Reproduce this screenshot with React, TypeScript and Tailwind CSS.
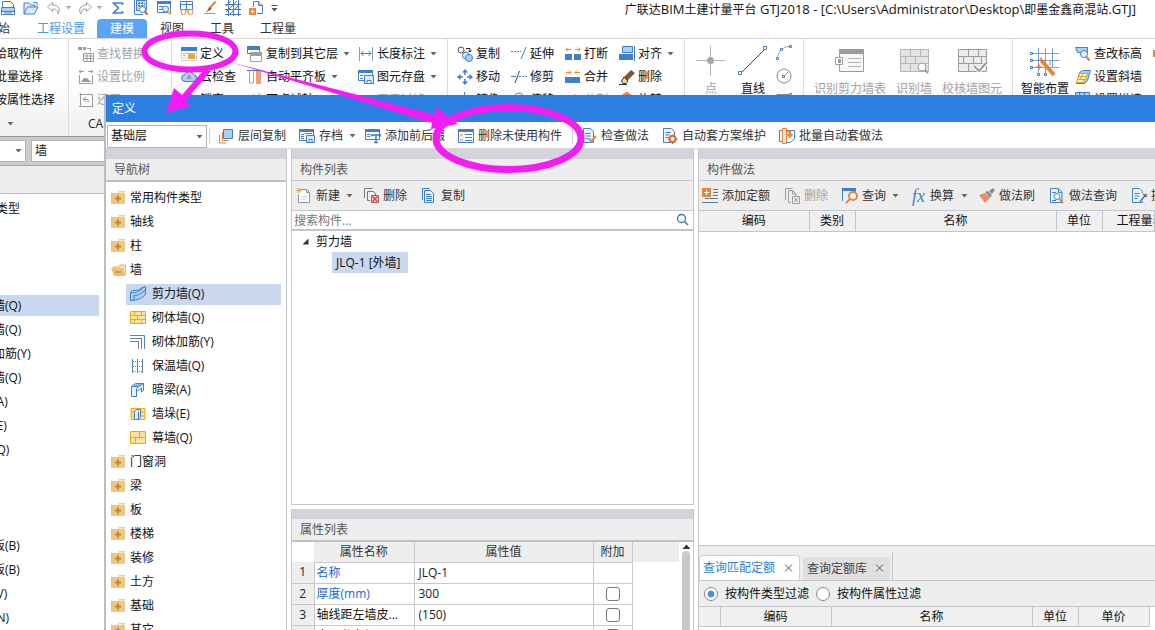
import { useState } from "react";
import type { ReactNode } from "react";
import { clsx } from "clsx";

const B = "#3f7fcb";
const LB = "#a9d0f7";
const O = "#e8853a";
const G = "#9c9c9c";

function Svg({ children, w = 16, h = 16 }: { children: ReactNode; w?: number; h?: number }) {
  return (
    <svg width={w} height={h} viewBox={`0 0 ${w} ${h}`} fill="none" className="shrink-0" aria-hidden="true">
      {children}
    </svg>
  );
}

function Caret({ className }: { className?: string }) {
  return (
    <svg width="7" height="4" viewBox="0 0 7 4" className={clsx("shrink-0", className)} aria-hidden="true">
      <path d="M0.5 0h6L3.5 3.5z" fill="#666" />
    </svg>
  );
}

const icons = {
  print: (
    <Svg>
      <path d="M2.500 7V1.500h8l3 3V7" fill="#fff" stroke={B} />
      <path d="M1.500 7.500h13v7h-13z" fill="#fff" stroke={B} />
      <path d="M2 8h12v3H2z" fill={LB} />
      <path d="M1 11.500h14M4 13h8" stroke={B} />
    </Svg>
  ),
  open: (
    <Svg>
      <path d="M1 14V3h5l1.500 2H12v2M1 14l3.500-7H15l-3.500 7z" fill="#dcecfb" stroke={B} />
      <path d="M10 2.500h4v3" stroke={B} />
    </Svg>
  ),
  undo: (
    <Svg>
      <path d="M6.500 2.500L1.500 7l5 4.500V9c4 0 5 1 5.500 5 3-4 1-9-5.500-9z" stroke={G} />
    </Svg>
  ),
  redo: (
    <Svg>
      <path d="M9.500 2.500l5 4.500-5 4.500V9c-4 0-5 1-5.500 5C1 10 3 5 9.500 5z" stroke={G} />
    </Svg>
  ),
  sigma: (
    <Svg>
      <path d="M12.500 5V3h-9l5 5-5 5h9V11" stroke={B} strokeWidth="1.600" />
    </Svg>
  ),
  calcSearch: (
    <Svg>
      <path d="M1.500 0v14.500H10" stroke={B} />
      <path d="M3.500 0.500h10v10h-10z" fill="#c9dff5" stroke={B} />
      <path d="M5 3.500h7M5 5.500h7M6.500 2v5M9.500 2v5" stroke="#5a6f8a" strokeDasharray="2 1" />
      <circle cx="9.500" cy="9.500" r="3" fill="#fff" stroke={B} />
      <path d="M11.500 11.500l3 3" stroke="#b5683c" strokeWidth="2" />
    </Svg>
  ),
  winSearch: (
    <Svg>
      <path d="M1.500 2.500h13v10h-13z" fill="#fff" stroke={B} />
      <path d="M1 1h14v3H1z" fill={B} />
      <path d="M3 6.500h4M3 9.500h3" stroke={B} />
      <circle cx="9.500" cy="9" r="3" fill="#e3effb" stroke={B} />
      <path d="M12 11.500l3 3" stroke="#e5b12c" strokeWidth="2" />
    </Svg>
  ),
  gridGlasses: (
    <Svg>
      <path d="M1.500 1.500h12v8h-12zM1 4.500h13M7.500 1v8" stroke={B} />
      <circle cx="4.500" cy="12" r="2.500" fill="#fff" stroke={O} />
      <circle cx="11.500" cy="12" r="2.500" fill="#fff" stroke={O} />
      <path d="M7 11.500h2" stroke={O} />
    </Svg>
  ),
  brushLine: (
    <Svg>
      <path d="M13.500 1.500L7 9" stroke={O} strokeWidth="2" />
      <path d="M8 7L4 12.500l5.500-3.500z" fill="#6b4a34" />
      <path d="M2 13.500h11" stroke={O} />
    </Svg>
  ),
  mesh: (
    <Svg>
      <path d="M0 4.500h16M0 9.500h16M0 14.500h16M3.500 0v16M8.500 0v16M13.500 0v16M1 6l5-5M1 12L12 1M4 15L15 4" stroke={B} />
    </Svg>
  ),
  docPlus: (
    <Svg>
      <path d="M5.500 7V1.500h5l4 4v8H9" stroke={B} />
      <path d="M10.500 1.500v4h4" fill={LB} stroke={B} />
      <path d="M1 8h7v7H1z" fill={O} />
      <path d="M4.500 9.500v4M2.500 11.500h4" stroke="#fff" />
    </Svg>
  ),
  findReplace: (
    <Svg>
      <path d="M0 1h4v3H0zM5 1h3v3H5z" fill={G} />
      <path d="M9 2.500h3.500v3M5.500 7.500h10v8h-10zM5 10h11M5 12.500h11M9 8v7M12.500 8v7" stroke={G} />
    </Svg>
  ),
  scale: (
    <Svg>
      <path d="M1 2.500h5M10 2.500h5M3 1L1 2.500 3 4M13 1l2 1.500L13 4M1.500 6v8.500h13V6" stroke={G} />
      <path d="M3 13l3-4h3l4 4z" fill={G} />
    </Svg>
  ),
  restore: (
    <Svg>
      <path d="M2.500 1v13.500M1 14.500h14M1.500 2.500h13V14M5 7.500h5v3M8 5L5 7.500 8 10" stroke={G} />
    </Svg>
  ),
  define: (
    <Svg>
      <path d="M0.500 2.500h15v12h-15z" fill="#fff" stroke="#c9d4e2" />
      <path d="M0 1h16v4H0z" fill={B} />
      <path d="M2 7.500h12M2 9.500h3M2 12h3" stroke="#b4c3d6" />
      <path d="M7 8h7v5H7z" fill="#e5a93c" />
    </Svg>
  ),
  cloud: (
    <Svg>
      <path d="M4 12.500a3.500 3.500 0 010-7 4.500 4.500 0 018.500 0 3.500 3.500 0 01-.5 7z" fill={LB} stroke={B} />
      <path d="M6 10l2-4 2 4M7 9h2" stroke="#c46a7a" />
    </Svg>
  ),
  lock: (
    <Svg>
      <path d="M4.500 7V5a3.500 3.500 0 017 0v2M3 7.500h10v7H3z" stroke={B} fill={LB} />
    </Svg>
  ),
  layers: (
    <Svg>
      <path d="M0.500 1.500h12v6h-12z" fill="#fff" stroke={B} />
      <path d="M0 0h13v4H0z" fill={B} />
      <path d="M3.500 7.500h11v8h-11z" fill="#fff" stroke={G} />
      <path d="M3 6h12v4H3z" fill={G} />
    </Svg>
  ),
  alignBoard: (
    <Svg>
      <path d="M0 1.500h16" stroke={B} />
      <path d="M2.500 2v12h4V2" fill="#fff" stroke="#8ea9c8" />
      <path d="M9 2h5v13H9z" fill="#f19a78" />
    </Svg>
  ),
  axis: (
    <Svg>
      <path d="M2.500 15V5M13 1L5 14M1 6l13 5M7 2v3" stroke={G} />
    </Svg>
  ),
  dimension: (
    <Svg>
      <path d="M1.500 1v14M14.500 1v14" stroke="#7f9cc0" />
      <path d="M3 7.500h10M5.500 5L3 7.500 5.500 10M10.500 5L13 7.500l-2.500 2.500" stroke={B} />
    </Svg>
  ),
  saveEl: (
    <Svg>
      <path d="M0.500 1.500h14v10h-14z" fill="#fff" stroke={B} />
      <path d="M0 1h15v3H0z" fill={B} />
      <path d="M2 6.500h3M2 9.500h3" stroke={B} />
      <path d="M6.500 6.500h9v8h-9z" fill="#dcebfa" stroke={B} />
      <path d="M9 11.500h4v3H9z" fill="#fff" stroke={B} />
    </Svg>
  ),
  filter: (
    <Svg>
      <path d="M0 3h14L9 9v6l-3-2V9z" fill={G} />
    </Svg>
  ),
  copyEl: (
    <Svg>
      <circle cx="4" cy="4" r="3" stroke="#555" />
      <path d="M9 2.500h4v3M11.500 4.500l1.500 1.500 1.500-1.500" stroke="#222" />
      <circle cx="9" cy="9.500" r="3.500" fill="#dcecfb" stroke={B} />
      <circle cx="12" cy="12" r="3.500" fill={LB} stroke={B} />
    </Svg>
  ),
  move: (
    <Svg>
      <path d="M8 0l3 3.500H5zM8 16l3-3.500H5zM0 8l3.500-3v6zM16 8l-3.500-3v6z" fill={B} />
      <path d="M8 3v3M8 10v3M3 8h3M10 8h3" stroke={B} strokeWidth="1.500" />
    </Svg>
  ),
  mirror: (
    <Svg>
      <path d="M7.500 0v15M5 4L1 14h4zM10 4l4 10h-4z" stroke={B} />
    </Svg>
  ),
  extend: (
    <Svg>
      <path d="M0 5.500h10" stroke={B} strokeDasharray="2 1" />
      <path d="M15 1l-5 12" stroke={B} />
    </Svg>
  ),
  trim: (
    <Svg>
      <path d="M0 7.500h5" stroke={B} />
      <path d="M8 7.500h8" stroke={B} strokeDasharray="2 1" />
      <path d="M8.500 2L4 14" stroke="#2c4f80" />
    </Svg>
  ),
  offset: (
    <Svg>
      <circle cx="8" cy="6" r="5" stroke="#5b8f72" />
      <circle cx="8" cy="6" r="2" stroke={B} />
    </Svg>
  ),
  breakEl: (
    <Svg>
      <path d="M0 8h7v6H0zM9 8h7v6H9z" fill={B} />
      <path d="M1 3.500h5M10 3.500h5M3 1.500L1 3.500l2 2M13 1.500l2 2-2 2" stroke={O} />
    </Svg>
  ),
  merge: (
    <Svg>
      <path d="M0 8h15v6H0z" fill={B} />
      <path d="M1 3.500h5M10 3.500h5M4 1.500l2 2-2 2M12 1.500l-2 2 2 2" stroke={O} />
    </Svg>
  ),
  split: (
    <Svg>
      <path d="M2 14L10 2l3 2-8 11z" fill={G} />
    </Svg>
  ),
  alignEl: (
    <Svg>
      <path d="M3.500 0.500h10v6h-10z" fill={LB} stroke={B} />
      <path d="M0 8h14v6H0z" fill={B} />
      <path d="M15.500 0v15" stroke={B} />
    </Svg>
  ),
  eraser: (
    <Svg>
      <path d="M12 1l4 3-8 8-4-3z" fill="#7d5638" />
      <path d="M5 8l4 4-2 2.500H4L2.500 12z" fill="#f0d5a8" stroke="#333" />
      <path d="M0 15.500h8" stroke="#333" />
    </Svg>
  ),
  rotate: (
    <Svg>
      <path d="M3 12V6a4 4 0 018 0v2M7 0l4 3-4 3" stroke={O} strokeWidth="2" />
    </Svg>
  ),
  elevation: (
    <Svg>
      <path d="M0.500 1.500h12v5l-3 3-3-3h-4z" fill={LB} stroke={B} />
      <circle cx="9" cy="8" r="3.500" fill="#e4f0fc" stroke={B} />
      <path d="M11.500 11l3 3.500" stroke={O} strokeWidth="2.500" />
    </Svg>
  ),
  slopeWall: (
    <Svg>
      <path d="M4.500 3.500l3-2h8l-3 10-3 3H1.500z" fill={LB} stroke={B} />
      <path d="M4.500 4.500h8l-3 9h-8z" fill="#fff3c4" stroke="#dba92b" />
      <path d="M4 7.500h8M3 10.500h8M8 4.500l-1 3M6 7.500l-1 3M9 10.500l-1 3" stroke="#dba92b" />
    </Svg>
  ),
  archWall: (
    <Svg>
      <path d="M0.500 0.500h14v13h-14z" fill={LB} stroke={B} />
      <path d="M0 3.500h15M0 7.500h15M4.500 1v9M9.500 1v9" stroke={B} />
    </Svg>
  ),
  floorCopy: (
    <Svg>
      <path d="M1.500 7v8H8M4.500 4v8.500H11" stroke={O} />
      <path d="M5.500 1.500h9v9h-9z" fill={LB} stroke={B} />
    </Svg>
  ),
  archive: (
    <Svg>
      <path d="M0.500 1.500h14v11h-14z" fill="#fff" stroke={B} />
      <path d="M0 1h15v3H0z" fill={B} />
      <path d="M2 6.500h3M2 8.500h3M2 10.500h3M6 5.500h7" stroke={B} />
      <path d="M7.500 7.500h8v7h-8z" fill="#dcebfa" stroke={B} />
      <path d="M10 11.500h3v3h-3z" fill="#fff" stroke={B} />
    </Svg>
  ),
  affix: (
    <Svg>
      <path d="M0.500 1.500h14v10h-14z" fill="#fff" stroke={B} />
      <path d="M0 1h15v3H0z" fill={B} />
      <path d="M2 6.500h3M2 8.500h3" stroke={B} />
      <path d="M6.500 8.500V7h9v1.500M11 7v8M9 14.500h4" stroke={B} strokeWidth="1.500" />
    </Svg>
  ),
  unused: (
    <Svg>
      <path d="M0.500 1.500h15v13h-15z" fill="#fff" stroke={B} />
      <path d="M0 1h16v3H0z" fill={B} />
      <path d="M7 6.500h7M7 9.500h7M7 12.500h7" stroke={B} />
      <path d="M2 5.500l3 3M5 5.500l-3 3M2 10.500l3 3M5 10.500l-3 3" stroke={O} />
    </Svg>
  ),
  checkDoc: (
    <Svg>
      <path d="M2.500 0.500h7l3 3v11h-10z" fill="#eaf3fc" stroke={B} />
      <path d="M4.500 5.500h5M4.500 8h5M4.500 10.500h3" stroke={B} />
      <path d="M8 10.500l2.500 3L15 8" stroke={O} strokeWidth="2" />
    </Svg>
  ),
  gearDoc: (
    <Svg>
      <path d="M1.500 0.500h8l3 3v11h-11z" fill="#eaf3fc" stroke={B} />
      <path d="M3.500 4.500h5M3.500 7h4M3.500 9.500h3" stroke={B} />
      <circle cx="10.500" cy="11" r="3" fill="#fff" stroke="#e8692c" strokeWidth="2" />
      <path d="M10.500 6.500v1.500M10.500 14v2M6 11h1.500M13.500 11H15.500M7.500 8l1 1M13.500 8l-1 1M7.500 14l1-1M13.500 14l-1-1" stroke="#e8692c" strokeWidth="1.500" />
    </Svg>
  ),
  batchDoc: (
    <Svg>
      <path d="M3.500 2.500h-3v11h3M7.500 2.500h8v8l-4 4h-4" stroke={B} />
      <path d="M3.500 0.500h4v15h-4z" fill="#fde0cb" stroke={O} />
      <path d="M7 3.500h4v4M8.500 6l2.500 2.500L13.500 6" stroke={O} strokeWidth="2" />
    </Svg>
  ),
  newDoc: (
    <Svg>
      <path d="M2.500 6v8.500h11V4.500l-3-3H5" fill="#fff" stroke="#8a95a3" />
      <path d="M10.500 1.500v3h3" stroke="#8a95a3" />
      <path d="M5 8.500h6M5 11h6" stroke="#c9d4e2" />
      <path d="M3 0v5M0.500 2.500h5M1 0.500l4 4M5 0.500l-4 4" stroke="#f0a030" />
    </Svg>
  ),
  deleteDoc: (
    <Svg>
      <path d="M1.500 10V0.500h8M4.500 12.500v-9h6l2 2V7M4.500 12.500H7" stroke="#777" />
      <path d="M8.500 7.500h7v7h-7z" fill="#f6d8d8" stroke="#c0504d" />
      <path d="M9.500 8.500l5 5M14.500 8.500l-5 5" stroke="#c0504d" strokeWidth="1.500" />
    </Svg>
  ),
  deleteGray: (
    <Svg>
      <path d="M1.500 12V0.500h7M4.500 14.500v-12h4l3.500 3.500v2M4.500 14.500H7M8.500 2.500V6H12" stroke={G} />
      <path d="M8.500 8.500h7v7h-7zM10 10l4 4M14 10l-4 4" stroke={G} />
    </Svg>
  ),
  copyDoc: (
    <Svg>
      <path d="M1.500 12V0.500h7" stroke={B} />
      <path d="M3.500 2.500h6l3 3v9h-9z" fill="#eaf3fc" stroke={B} />
      <path d="M5 6.500h5M5 8.500h6M5 10.500h6M5 12.500h6" stroke={B} />
    </Svg>
  ),
  addQuota: (
    <Svg>
      <path d="M0 0h9v9H0z" fill={O} />
      <path d="M4.500 2v5M2 4.500h5" stroke="#fff" />
      <path d="M11 1.500h5M11 4.500h5M11 7.500h5M3 10.500h13M0 14.500h16" stroke="#5f7896" />
    </Svg>
  ),
  query: (
    <Svg>
      <path d="M0.500 13V1.500h13V4" stroke={B} />
      <path d="M0 0h14v3H0z" fill={B} />
      <circle cx="11" cy="8" r="4" fill="#fff" stroke={O} strokeWidth="2" />
      <path d="M8 11l-4 4" stroke={O} strokeWidth="2" />
    </Svg>
  ),
  brush: (
    <Svg>
      <path d="M0 7l6-2 5 5-5 5z" fill="#f0896a" />
      <path d="M6 4l3-1 4 4-2 3zM10 3l4-3 2 2-3 4z" fill="#8a8f96" />
    </Svg>
  ),
  docSearch: (
    <Svg>
      <path d="M1.500 0.500h8l3.500 3.500v10.500h-11.500z" fill="#eaf3fc" stroke={B} />
      <path d="M3 4.500h4M3 12.500h4M9.500 1v3.500H13" stroke={B} />
      <circle cx="8" cy="8.500" r="3" fill="#fff" stroke={B} />
      <path d="M10.500 11l3.500 4" stroke={O} strokeWidth="2" />
    </Svg>
  ),
  docPen: (
    <Svg>
      <path d="M11.500 5V3.500l-3-3h-7v14h10V13" fill="#eaf3fc" stroke={B} />
      <path d="M3.500 5.500h5M3.500 8h5M3.500 10.500h3" stroke={B} />
      <path d="M15.500 6L9 13.500M12 6l4 3" stroke="#5b6b7c" strokeWidth="1.500" />
    </Svg>
  ),
  folder: (
    <Svg w={15}>
      <path d="M0 3h14v11H0z" fill="#ecc682" />
      <path d="M6 2.500L8 1h6v1.500z" fill="#f0cf94" />
      <path d="M7 5.500v6M4 8.500h6" stroke="#b98a35" strokeWidth="2" />
    </Svg>
  ),
  folderOpen: (
    <Svg w={15}>
      <path d="M2 5h6l1-2h5.500v10H3z" fill="#f6e3bd" stroke="#e3b763" />
      <path d="M0 6h12l2 8H3z" fill="#ecc070" />
      <path d="M4 10h6" stroke="#a97c2c" />
    </Svg>
  ),
  shearWall: (
    <Svg>
      <path d="M0.500 6.500C6 7 11 5 13 1.500l2.500-1V8C13 12 7 14.500 0.500 14.500z" fill={LB} stroke={B} />
      <path d="M0.500 6.500l2-2C7 5 11 3 13 1M4 9.500c4 0 8-2 11.500-6M4 9.500v5" stroke={B} />
    </Svg>
  ),
  brick: (
    <Svg>
      <path d="M0.500 1.500h15v12h-15z" fill="#fce29a" stroke="#f0a818" />
      <path d="M0 5.500h16M0 9.500h16M4.500 1v4M11.500 1v4M7.500 5v4M4.500 9v5M11.500 9v5" stroke="#f0a818" />
    </Svg>
  ),
  rebar: (
    <Svg>
      <path d="M0 1.500h14.500V15M0 4.500h11.500V15M0 7.500h8.500V15" stroke="#5b84b5" />
    </Svg>
  ),
  insulation: (
    <Svg>
      <path d="M2.500 1v14M7.500 1v14M12.500 1v14" stroke="#5b84b5" />
      <path d="M3 3.500h10M3 8.500h10M3 13.500h10" stroke="#5b84b5" strokeDasharray="1 1" />
    </Svg>
  ),
  hiddenBeam: (
    <Svg>
      <path d="M1.500 4.500l4-3h8v7l-2 1.500V6l-5 3.500v5h-5z" fill="#eaf3fc" stroke={B} />
      <path d="M1.500 4.500h7l5-3M4 3h7M6.500 14.500v-8l2-2" stroke={B} />
    </Svg>
  ),
  pier: (
    <Svg>
      <path d="M1 2.500h14v11H1z" fill="#fce29a" stroke="#f0a818" />
      <path d="M1 6h14M1 10h14" stroke="#f0a818" />
      <path d="M4.500 5.500l2-2h4v8l-2 2h-4zM8.500 5.500v8" fill="#e3effb" stroke={B} />
    </Svg>
  ),
  curtain: (
    <Svg>
      <path d="M0.500 1.500h15v12h-15z" fill="#fce0a0" stroke="#f0a818" />
      <path d="M0 7.500h16M9.500 1v6M5.500 7v7" stroke="#f0a818" />
    </Svg>
  ),
};

type IconName = keyof typeof icons;

interface ToolProps {
  icon?: IconName;
  label: string;
  caret?: boolean;
  disabled?: boolean;
  className?: string;
}

function RibbonItem({ icon, label, caret, disabled, className }: ToolProps) {
  return (
    <button
      disabled={disabled}
      className={clsx("flex h-[23px] items-center gap-[3px] whitespace-nowrap", disabled ? "text-[#a3a3a3]" : "text-[#111]", className)}
    >
      {icon && icons[icon]}
      {label}
      {caret && <Caret className="ml-[2px]" />}
    </button>
  );
}

function ToolItem({ icon, label, caret, disabled, className }: ToolProps) {
  return (
    <button
      disabled={disabled}
      className={clsx("flex shrink-0 items-center gap-1 whitespace-nowrap", disabled ? "text-[#a3a3a3]" : "text-[#333]", className)}
    >
      {icon && icons[icon]}
      {label}
      {caret && <Caret className="ml-[2px]" />}
    </button>
  );
}

function BigItem({ label, disabled, children, className }: { label: string; disabled?: boolean; children: ReactNode; className?: string }) {
  return (
    <button
      disabled={disabled}
      className={clsx("flex shrink-0 flex-col items-center whitespace-nowrap pt-[3px]", disabled ? "text-[#a3a3a3]" : "text-[#111]", className)}
    >
      {children}
      <span className="mt-1 leading-4">{label}</span>
    </button>
  );
}

function TitleBar() {
  return (
    <header className="flex h-[19px] items-center overflow-hidden">
      <div className="flex h-4 shrink-0 items-center self-start">
        {icons.print}
        <span className="ml-[7px]">{icons.open}</span>
        <span className="ml-[7px]">{icons.undo}</span>
        <Caret className="ml-[3px] opacity-50" />
        <span className="ml-[5px]">{icons.redo}</span>
        <Caret className="ml-[3px] opacity-50" />
        <div className="ml-[7px] flex gap-[7px]">
          {icons.sigma}
          {icons.calcSearch}
          {icons.winSearch}
          {icons.gridGlasses}
          {icons.brushLine}
          {icons.mesh}
          {icons.docPlus}
        </div>
        <svg width="7" height="7" viewBox="0 0 7 7" className="ml-[7px]" aria-hidden="true">
          <path d="M0.500 0.500h6" stroke="#555" />
          <path d="M0.500 3h6l-3 3.500z" fill="#555" />
        </svg>
      </div>
      <h1 className="ml-auto whitespace-nowrap pr-[19px] text-[#111]">
        广联达<span className="text-[13px]">BIM</span>土建计量平台
        <span className="text-[13px]"> GTJ2018 - [C:\Users\Administrator\Desktop\</span>
        即墨金鑫商混站<span className="text-[13px]">.GTJ]</span>
      </h1>
    </header>
  );
}

function MenuTabs() {
  return (
    <nav className="flex h-5 items-end border-b border-[#d5d5d5] text-[#333]">
      <button className="-ml-[14px] h-[18px]">开始</button>
      <button className="ml-[27px] h-[18px] text-[#4f97e6]">工程设置</button>
      <button className="ml-3 h-[19px] w-[50px] rounded-t-sm bg-[#5ba3f5] text-white">建模</button>
      <button className="ml-[13px] h-[18px]">视图</button>
      <button className="ml-[26px] h-[18px]">工具</button>
      <button className="ml-[26px] h-[18px]">工程量</button>
    </nav>
  );
}

function Ribbon() {
  const group = "flex shrink-0 border-r border-[#dcdcdc] pt-[3px]";
  return (
    <section className="flex h-[98px] shrink-0 overflow-hidden border-b border-[#9a9a9a] bg-linear-to-b from-white from-40% to-[#eef0f1]">
      <div className={clsx(group, "w-[69px] flex-col")}>
        <RibbonItem label="拾取构件" className="-ml-[5px]" />
        <RibbonItem label="批量选择" className="-ml-[5px]" />
        <RibbonItem label="按属性选择" className="-ml-[5px]" />
        <Caret className="mt-[11px] ml-[7px]" />
      </div>
      <div className={clsx(group, "w-[103px] flex-col pl-[9px]")}>
        <RibbonItem icon="findReplace" label="查找替换" disabled />
        <RibbonItem icon="scale" label="设置比例" disabled />
        <RibbonItem icon="restore" label="还原CAD" disabled />
        <span className="mt-[5px] ml-[10px] text-[#222]">CAD操作</span>
      </div>
      <div className={clsx(group, "w-[276px] pl-[9px]")}>
        <div className="w-[66px]">
          <RibbonItem icon="define" label="定义" />
          <RibbonItem icon="cloud" label="云检查" />
          <RibbonItem icon="lock" label="锁定" />
        </div>
        <div className="w-[111px]">
          <RibbonItem icon="layers" label="复制到其它层" caret />
          <RibbonItem icon="alignBoard" label="自动平齐板" caret />
          <RibbonItem icon="axis" label="两点辅轴" />
        </div>
        <div>
          <RibbonItem icon="dimension" label="长度标注" caret />
          <RibbonItem icon="saveEl" label="图元存盘" caret />
          <RibbonItem icon="filter" label="图元过滤" disabled />
        </div>
      </div>
      <div className={clsx(group, "w-[237px] pl-[9px]")}>
        <div className="w-[54px]">
          <RibbonItem icon="copyEl" label="复制" />
          <RibbonItem icon="move" label="移动" />
          <RibbonItem icon="mirror" label="镜像" />
        </div>
        <div className="w-[54px]">
          <RibbonItem icon="extend" label="延伸" />
          <RibbonItem icon="trim" label="修剪" />
          <RibbonItem icon="offset" label="偏移" />
        </div>
        <div className="w-[54px]">
          <RibbonItem icon="breakEl" label="打断" />
          <RibbonItem icon="merge" label="合并" />
          <RibbonItem icon="split" label="分割" disabled />
        </div>
        <div>
          <RibbonItem icon="alignEl" label="对齐" caret />
          <RibbonItem icon="eraser" label="删除" />
          <RibbonItem icon="rotate" label="旋转" />
        </div>
      </div>
      <div className={clsx(group, "w-[119px] pl-[5px]")}>
        <BigItem label="点" disabled className="w-[42px]">
          <Svg w={32} h={32}>
            <path d="M15.500 1v30M1 15.500h29" stroke="#b5b5b5" />
            <circle cx="15.500" cy="15.500" r="3.500" fill="#a8a8a8" />
          </Svg>
        </BigItem>
        <BigItem label="直线" className="w-[42px]">
          <Svg w={32} h={32}>
            <path d="M4 28L28 4" stroke="#444" />
            <path d="M1.500 26.500h3v3h-3zM26.500 1.500h3v3h-3z" fill="#fff" stroke={B} />
          </Svg>
        </BigItem>
        <div className="flex flex-col gap-[7px] pt-[3px] pl-[2px]">
          <Svg>
            <path d="M1.500 13C2 7 6 2 13 1.500" stroke="#8fa6c4" />
            <path d="M0.500 12.500h2v2h-2zM4.500 3.500h2v2h-2zM13.500 0.500h2v2h-2z" fill="#fff" stroke={B} />
          </Svg>
          <Svg>
            <circle cx="8" cy="8" r="7" stroke="#888" />
            <path d="M8 8l4-4" stroke="#888" />
            <path d="M6.500 7.500h2v2h-2z" fill="#fff" stroke={B} />
          </Svg>
          <Svg>
            <path d="M1 3.500h12v8H1z" stroke="#888" />
            <path d="M13.500 2.500h2v2h-2z" fill="#fff" stroke={B} />
          </Svg>
        </div>
      </div>
      <div className={clsx(group, "gap-[10px] px-[10px]")}>
        <BigItem label="识别剪力墙表" disabled>
          <Svg w={32} h={32}>
            <path d="M5.500 4.500h24v22h-24z" fill="#f7f7f7" stroke={G} />
            <path d="M5 4h25v5H5z" fill={G} />
            <path d="M14 13.500h13M14 17.500h13M14 21.500h13" stroke="#b5b5b5" />
            <path d="M1.500 12.500h7v7h-7z" fill="#fff" stroke={G} />
            <path d="M4 14h3v4H4z" fill={G} />
          </Svg>
        </BigItem>
        <BigItem label="识别墙" disabled>
          <Svg w={32} h={32}>
            <path d="M2.500 4.500h28v22h-28z" fill="#e4e4e4" stroke="#b5b5b5" />
            <path d="M2 11.500h28M2 18.500h28M12.500 4v7M22.500 4v7M7.500 11v7M17.500 11v7M12.500 18v8" stroke="#b5b5b5" />
            <circle cx="24" cy="22" r="4" fill="#fff" stroke={G} />
            <path d="M27 25l3 3" stroke={G} strokeWidth="2" />
          </Svg>
        </BigItem>
        <BigItem label="校核墙图元" disabled>
          <Svg w={32} h={32}>
            <path d="M2.500 4.500h28v22h-28z" fill="#ececec" stroke={G} />
            <path d="M2 11.500h28M2 18.500h28M12.500 4v7M22.500 4v7M7.500 11v7M17.500 11v7M12.500 18v8M25.500 11v7" stroke={G} />
            <path d="M18 21l5 5 8-9" stroke="#fff" strokeWidth="4" />
            <path d="M18 21l5 5 8-9" stroke={G} strokeWidth="2" />
          </Svg>
        </BigItem>
      </div>
      <div className="flex shrink-0 pt-[3px] pl-2">
        <BigItem label="智能布置">
          <Svg w={32} h={32}>
            <path d="M4 8.500h26M4 15.500h26M4 22.500h26M9.500 3v25M16.500 3v25M23.500 3v20" stroke="#6fa3e0" />
            <path d="M1.500 7.500h2v2h-2zM1.500 14.500h2v2h-2zM1.500 21.500h2v2h-2zM8.500 28.500h2v2h-2zM15.500 28.500h2v2h-2z" fill="#fff" stroke={B} />
            <path d="M13 16l12 14" stroke={O} strokeWidth="4" />
            <path d="M12 12v6M9 15h6M10 19v6M7 22h6M21 16v4" stroke="#e8692c" />
          </Svg>
        </BigItem>
        <div className="ml-[6px]">
          <RibbonItem icon="elevation" label="查改标高" />
          <RibbonItem icon="slopeWall" label="设置斜墙" />
          <RibbonItem icon="archWall" label="设置拱墙" />
        </div>
        <div className="mt-2 ml-[11px] h-[7px] w-3 bg-[#e8853a]" />
      </div>
    </section>
  );
}

// null keeps an empty 24px row in the scrolled-out tree
const sideRows: (string | null)[] = [
  null,
  null,
  null,
  "剪力墙(Q)",
  "砌体墙(Q)",
  "砌体加筋(Y)",
  "保温墙(Q)",
  "暗梁(A)",
  "墙垛(E)",
  "幕墙(Q)",
  null,
  null,
  null,
  "现浇板(B)",
  "螺旋板(B)",
  "柱帽(V)",
  "板洞(N)",
];

function SidePane() {
  return (
    <aside className="flex min-h-0 flex-1 flex-col">
      <div className="flex h-[29px] shrink-0 items-center border-b border-[#a5a5a8] bg-[#cbcbcd]">
        <button aria-label="楼层" className="flex h-[22px] w-[26px] items-center justify-center border border-l-0 border-[#b4b4b4] bg-white pl-3">
          <Caret />
        </button>
        <div className="ml-[5px] flex h-[22px] w-[120px] items-center border border-[#b4b4b4] bg-white pl-[3px]">墙</div>
      </div>
      <div className="h-7 shrink-0 border-b border-[#b9c0cc] bg-[#ededee]" />
      <ul className="w-[99px] pt-[3px]">
        <li className="-ml-[52px] h-6 whitespace-nowrap leading-6">常用构件类型</li>
        {sideRows.map((row, i) => (
          <li key={i} className="flex h-6 items-center">
            {row && (
              <span className={clsx("h-[21px] w-full whitespace-nowrap leading-[21px]", i === 3 && "bg-[#c9d8ee]")}>
                <span className="-ml-[31px]">{row}</span>
              </span>
            )}
          </li>
        ))}
      </ul>
    </aside>
  );
}

function PanelHead({ title, thick }: { title: string; thick?: boolean }) {
  return (
    <div
      className={clsx(
        "shrink-0 border-t-10 border-t-[#d3d3da] bg-[#eee] pl-2 text-[#555]",
        thick ? "h-[33px] border-b-2 border-b-[#bfbfc4]" : "h-8 border-b border-b-[#c4c6cc]",
      )}
    >
      <h2 className="leading-[22px]">{title}</h2>
    </div>
  );
}

const wallChildren: { label: string; icon: IconName }[] = [
  { label: "剪力墙(Q)", icon: "shearWall" },
  { label: "砌体墙(Q)", icon: "brick" },
  { label: "砌体加筋(Y)", icon: "rebar" },
  { label: "保温墙(Q)", icon: "insulation" },
  { label: "暗梁(A)", icon: "hiddenBeam" },
  { label: "墙垛(E)", icon: "pier" },
  { label: "幕墙(Q)", icon: "curtain" },
];

function NavTree() {
  const [selected, setSelected] = useState("剪力墙(Q)");
  const folders = ["常用构件类型", "轴线", "柱", "墙", "门窗洞", "梁", "板", "楼梯", "装修", "土方", "基础", "其它"];
  return (
    <section className="flex w-[181px] shrink-0 flex-col overflow-hidden border-r border-[#c4c6cc]">
      <PanelHead title="导航树" thick />
      <ul className="pt-1 text-[#111]">
        {folders.map((name) => (
          <li key={name}>
            <button className="flex h-6 items-center gap-1 pl-[5px]">
              {name === "墙" ? icons.folderOpen : icons.folder}
              {name}
            </button>
            {name === "墙" && (
              <ul>
                {wallChildren.map((child) => (
                  <li key={child.label} className="flex h-6 items-center pr-[5px] pl-5">
                    <button
                      onClick={() => setSelected(child.label)}
                      className={clsx("flex h-[21px] w-full items-center gap-[6px] pl-1", selected === child.label && "bg-[#c9d8ee]")}
                    >
                      {icons[child.icon]}
                      {child.label}
                    </button>
                  </li>
                ))}
              </ul>
            )}
          </li>
        ))}
      </ul>
    </section>
  );
}

function ComponentList() {
  return (
    <section className="flex min-h-0 flex-1 flex-col border border-t-0 border-[#c4c6cc]">
      <PanelHead title="构件列表" />
      <div className="flex h-[30px] shrink-0 items-center border-b border-[#c4c6cc] bg-[#eee] pl-1">
        <ToolItem icon="newDoc" label="新建" caret />
        <ToolItem icon="deleteDoc" label="删除" className="ml-[10px]" />
        <ToolItem icon="copyDoc" label="复制" className="ml-[14px]" />
      </div>
      <div className="flex h-5 shrink-0 items-center border-b-2 border-[#c4c4c8] pr-1">
        <input aria-label="搜索构件" placeholder="搜索构件..." className="h-[18px] min-w-0 flex-1 pt-px pl-0.5 leading-4 outline-none placeholder:text-[#777]" />
        <Svg w={14} h={14}>
          <circle cx="6.500" cy="5.500" r="4" stroke="#2f7ab8" strokeWidth="1.300" />
          <path d="M9.500 8.500L13 12" stroke="#2f7ab8" strokeWidth="1.500" />
        </Svg>
      </div>
      <div className="flex h-[21px] items-center pl-[10px] text-[#111]">
        <Svg w={7} h={7}>
          <path d="M6.500 0.500v6h-6z" fill="#333" />
        </Svg>
        <span className="ml-[7px]">剪力墙</span>
      </div>
      <button className="ml-10 h-[21px] w-[76px] self-start bg-[#c9d8ee] pl-1 text-left whitespace-nowrap text-[#111]">JLQ-1 [外墙]</button>
    </section>
  );
}

const props = [
  { name: "名称", value: "JLQ-1", blue: true, check: false },
  { name: "厚度(mm)", value: "300", blue: true, check: true },
  { name: "轴线距左墙皮...", value: "(150)", blue: false, check: true },
  { name: "水平分布钢...", value: "(2)Φ12@200", blue: false, check: true },
];

function PropertyList() {
  const cell = "border-r border-b border-[#c9c9c9]";
  return (
    <section className="flex h-[121px] shrink-0 flex-col overflow-hidden border-x border-[#c4c6cc]">
      <PanelHead title="属性列表" thick />
      <div className="flex min-h-0 flex-1">
        <div className="flex-1 overflow-hidden">
          <table className="w-full table-fixed border-collapse text-[#222]">
            <colgroup>
              <col className="w-[22px]" />
              <col className="w-[100px]" />
              <col className="w-[179px]" />
              <col className="w-[39px]" />
              <col />
            </colgroup>
            <thead>
              <tr className="h-5 text-[#333]">
                <td />
                <th className={clsx(cell, "bg-[#eee] p-0 pt-px font-normal")}>属性名称</th>
                <th className={clsx(cell, "bg-[#eee] p-0 pt-px font-normal")}>属性值</th>
                <th className={clsx(cell, "bg-[#eee] p-0 pt-px font-normal")}>附加</th>
                <td className="bg-[#eee]" />
              </tr>
            </thead>
            <tbody>
              {props.map((p, i) => (
                <tr key={p.name} className="h-[21px]">
                  <td className={clsx(cell, "bg-[#eee] p-0 text-center")}>{i + 1}</td>
                  <td className={clsx(cell, "py-0 pr-0 pl-[2px] whitespace-nowrap", p.blue ? "text-[#2563d8]" : "text-[#111]")}>{p.name}</td>
                  <td className={clsx(cell, "py-0 pr-0 pl-1")}>{p.value}</td>
                  <td className={clsx(cell, "p-0")}>
                    {p.check && (
                      <input type="checkbox" aria-label={`${p.name} 附加`} className="mx-auto block size-[14px] appearance-none rounded-[3px] border border-[#777] bg-white checked:bg-[#3f7fcb]" />
                    )}
                  </td>
                  <td />
                </tr>
              ))}
            </tbody>
          </table>
        </div>
        <div className="flex w-[14px] flex-col items-center pt-[2px]">
          <Svg w={9} h={5}>
            <path d="M0.500 5h8L4.500 0.500z" fill="#333" />
          </Svg>
          <div className="mt-[2px] w-2 flex-1 rounded-t bg-[#c8c8c8]" />
        </div>
      </div>
    </section>
  );
}

function MethodPanel() {
  const th = "border-r border-b border-[#c4c6cc] bg-[#f0f0f0] p-0 pt-px font-normal whitespace-nowrap";
  return (
    <section className="flex min-h-0 flex-1 flex-col overflow-hidden border-b border-[#c4c6cc]">
      <PanelHead title="构件做法" />
      <div className="flex h-[30px] shrink-0 items-center overflow-hidden border-b border-[#c4c6cc] bg-[#eee] pl-[3px]">
        <ToolItem icon="addQuota" label="添加定额" />
        <ToolItem icon="deleteGray" label="删除" disabled className="ml-[14px]" />
        <ToolItem icon="query" label="查询" caret className="ml-[14px]" />
        <button className="ml-[13px] flex shrink-0 items-center gap-[5px] text-[#333]">
          <span className="font-['Liberation_Serif',serif] text-[18px] leading-4 text-[#3f7fcb] italic">fx</span>
          换算
          <Caret className="ml-[2px]" />
        </button>
        <ToolItem icon="brush" label="做法刷" className="ml-[11px]" />
        <ToolItem icon="docSearch" label="做法查询" className="ml-[14px]" />
        <ToolItem icon="docPen" label="提取做法" className="ml-[14px]" />
      </div>
      <table className="w-full table-fixed border-collapse text-[#111]">
        <colgroup>
          <col className="w-[110px]" />
          <col className="w-[46px]" />
          <col className="w-[201px]" />
          <col className="w-[46px]" />
          <col />
        </colgroup>
        <thead>
          <tr className="h-5">
            <th className={th}>编码</th>
            <th className={th}>类别</th>
            <th className={th}>名称</th>
            <th className={th}>单位</th>
            <th className={clsx(th, "overflow-hidden pl-[14px] text-left")}>工程量表达式</th>
          </tr>
        </thead>
      </table>
    </section>
  );
}

function QueryPanel() {
  const [mode, setMode] = useState("type");
  const th = "border-r border-y border-[#c4c6cc] bg-[#f0f0f0] p-0 pt-px font-normal";
  const radio =
    "size-[14px] appearance-none rounded-full border border-[#888] bg-white checked:bg-radial checked:from-[#4a90e2] checked:from-35% checked:to-white checked:to-45%";
  return (
    <section className="flex h-[84px] shrink-0 flex-col overflow-hidden bg-[#eee]">
      <div className="flex h-[35px] shrink-0 items-end border-b border-[#c4c6cc]">
        <button className="flex h-[25px] w-[101px] items-center justify-between rounded-t-sm border border-b-0 border-[#d0d0d0] bg-white pr-[6px] pl-[3px] text-[#2f7fe0]">
          查询匹配定额
          <Svg w={9} h={9}>
            <path d="M1 0.500l7 7M8 0.500l-7 7" stroke="#555" />
          </Svg>
        </button>
        <div className="ml-[3px] flex h-7 items-end border-r border-[#c4c6cc] pr-[2px]">
          <button className="flex h-[23px] w-[87px] items-center justify-between rounded-t-sm bg-[#e0e0e0] pr-[6px] pl-1 text-[#444]">
            查询定额库
            <Svg w={9} h={9}>
              <path d="M1 0.500l7 7M8 0.500l-7 7" stroke="#555" />
            </Svg>
          </button>
        </div>
      </div>
      <div className="flex h-[25px] shrink-0 items-center pl-[5px] text-[#111]">
        <label className="flex items-center gap-[7px]">
          <input type="radio" name="filter" checked={mode === "type"} onChange={() => setMode("type")} className={radio} />
          按构件类型过滤
        </label>
        <label className="ml-[7px] flex items-center gap-[7px]">
          <input type="radio" name="filter" checked={mode === "prop"} onChange={() => setMode("prop")} className={radio} />
          按构件属性过滤
        </label>
      </div>
      <div className="flex-1 bg-white">
        <table className="w-full table-fixed border-collapse text-[#111]">
          <colgroup>
            <col className="w-[21px]" />
            <col className="w-[111px]" />
            <col className="w-[201px]" />
            <col className="w-[46px]" />
            <col className="w-[71px]" />
            <col />
          </colgroup>
          <thead>
            <tr className="h-5">
              <td className={th} />
              <th className={th}>编码</th>
              <th className={th}>名称</th>
              <th className={th}>单位</th>
              <th className={th}>单价</th>
              <td className="border-t border-[#c4c6cc]" />
            </tr>
          </thead>
        </table>
      </div>
    </section>
  );
}

function DefineDialog() {
  return (
    <div role="dialog" aria-label="定义" className="absolute top-[95px] right-0 bottom-0 left-[104px] flex flex-col overflow-hidden border-l-2 border-[#b9bdc8] bg-white">
      <div className="flex h-[27px] shrink-0 items-center bg-[#2b7fe0] pl-[6px] text-white">定义</div>
      <div className="flex h-[27px] shrink-0 items-center overflow-hidden border-b border-[#d3d3da] pt-[2px]">
        <div className="relative ml-px w-[100px]">
          <select aria-label="楼层" className="h-[23px] w-full appearance-none border border-[#b4b4b4] bg-white pl-[3px] text-[#111]">
            <option>基础层</option>
          </select>
          <Caret className="pointer-events-none absolute top-[10px] right-1" />
        </div>
        <span className="ml-[2px] h-4 w-px bg-[#d0d0d0]" />
        <ToolItem icon="floorCopy" label="层间复制" className="ml-2" />
        <ToolItem icon="archive" label="存档" caret className="ml-[13px]" />
        <ToolItem icon="affix" label="添加前后缀" className="ml-[9px]" />
        <ToolItem icon="unused" label="删除未使用构件" className="ml-[13px]" />
        <span className="ml-[10px] h-4 w-px bg-[#d0d0d0]" />
        <ToolItem icon="checkDoc" label="检查做法" className="ml-2" />
        <ToolItem icon="gearDoc" label="自动套方案维护" className="ml-[13px]" />
        <ToolItem icon="batchDoc" label="批量自动套做法" className="ml-[13px]" />
      </div>
      <div className="flex min-h-0 flex-1">
        <NavTree />
        <div className="ml-1 flex w-[403px] shrink-0 flex-col gap-1">
          <ComponentList />
          <PropertyList />
        </div>
        <div className="ml-1 flex min-w-0 flex-1 flex-col border-l border-[#c4c6cc]">
          <MethodPanel />
          <QueryPanel />
        </div>
      </div>
    </div>
  );
}

// Hand-drawn marks leading from the ribbon button to the dialog and its toolbar
function Annotations() {
  return (
    <svg width="620" height="200" viewBox="0 0 620 200" fill="none" className="pointer-events-none absolute top-0 left-0" aria-hidden="true">
      <ellipse cx="190" cy="51.500" rx="45.500" ry="18" stroke="#f31df3" strokeWidth="6" />
      <path d="M203 71L182 95L174 88L166 113L190 106L186 100L211 71z" fill="#f31df3" />
      <path d="M230 62L436 115L436 107L458 124L431 129L432 123L340 95z" fill="#f31df3" />
      <ellipse cx="508.500" cy="138.500" rx="72.500" ry="31" stroke="#f31df3" strokeWidth="7" />
    </svg>
  );
}

export default function App() {
  return (
    <main className="relative flex h-screen flex-col overflow-hidden bg-white font-['Open_Sans','Noto_Sans_CJK_SC',sans-serif] text-[12px] leading-4 text-[#111]">
      <TitleBar />
      <MenuTabs />
      <Ribbon />
      <SidePane />
      <DefineDialog />
      <Annotations />
    </main>
  );
}
